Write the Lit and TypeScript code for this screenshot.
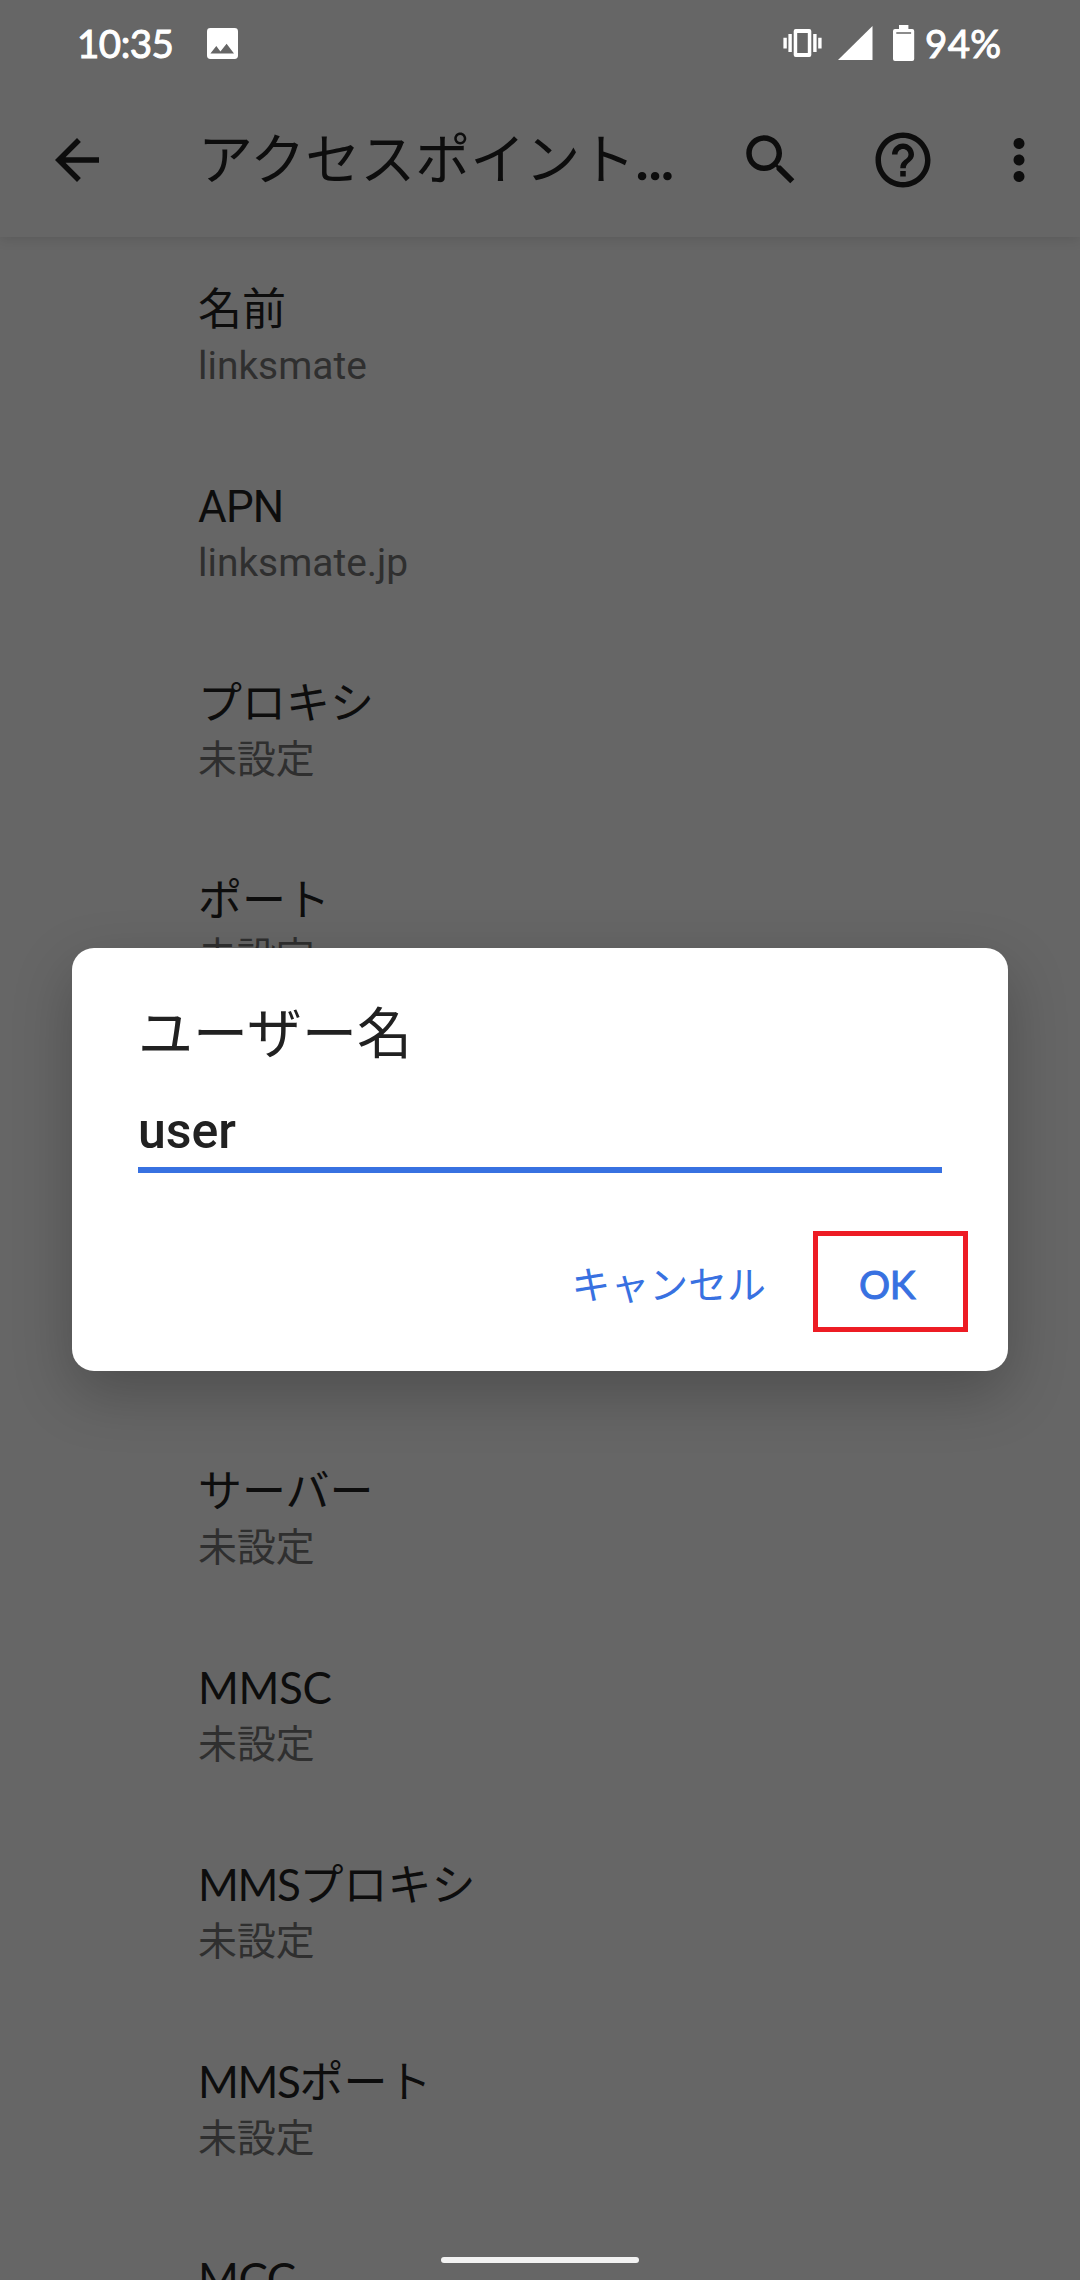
import { LitElement, html, css, svg, nothing } from "lit";
import { customElement, property } from "lit/decorators.js";

interface Setting {
  title: string;
  summary?: string;
  geometric?: boolean;
}

const UPPER: Setting[] = [
  { title: "名前", summary: "linksmate" },
  { title: "APN", summary: "linksmate.jp" },
  { title: "プロキシ", summary: "未設定" },
  { title: "ポート", summary: "未設定" },
];

const LOWER: Setting[] = [
  { title: "サーバー", summary: "未設定" },
  { title: "MMSC", summary: "未設定", geometric: true },
  { title: "MMSプロキシ", summary: "未設定", geometric: true },
  { title: "MMSポート", summary: "未設定", geometric: true },
  { title: "MCC", geometric: true },
];

const ICONS: Record<string, string> = {
  back: "M20 11H7.83l5.59-5.59L12 4l-8 8 8 8 1.41-1.41L7.83 13H20v-2z",
  search:
    "M15.5 14h-.79l-.28-.27C15.41 12.59 16 11.11 16 9.5 16 5.91 13.09 3 9.5 3S3 5.91 3 9.5 5.91 16 9.5 16c1.61 0 3.09-.59 4.23-1.57l.27.28v.79l5 4.99L20.49 19l-4.99-5zm-6 0C7.01 14 5 11.99 5 9.5S7.01 5 9.5 5 14 7.01 14 9.5 11.99 14 9.5 14z",
  help: "M11 18h2v-2h-2v2zm1-16C6.48 2 2 6.48 2 12s4.48 10 10 10 10-4.48 10-10S17.52 2 12 2zm0 18c-4.41 0-8-3.59-8-8s3.59-8 8-8 8 3.59 8 8-3.59 8-8 8zm0-14c-2.21 0-4 1.79-4 4h2c0-1.1.9-2 2-2s2 .9 2 2c0 2-3 1.75-3 5h2c0-2.25 3-2.5 3-5 0-2.21-1.79-4-4-4z",
  more: "M12 8c1.1 0 2-.9 2-2s-.9-2-2-2-2 .9-2 2 .9 2 2 2zm0 2c-1.1 0-2 .9-2 2s.9 2 2 2 2-.9 2-2-.9-2-2-2zm0 6c-1.1 0-2 .9-2 2s.9 2 2 2 2-.9 2-2-.9-2-2-2z",
};

@customElement("tool-icon")
class ToolIcon extends LitElement {
  @property() name = "back";

  static styles = css`
    :host {
      display: block;
      width: 66px;
      height: 66px;
      flex: none;
    }
    svg {
      display: block;
      width: 66px;
      height: 66px;
      fill: #0d0d0d;
    }
  `;

  render() {
    return html`<svg viewBox="0 0 24 24">${svg`<path d=${ICONS[this.name]}></path>`}</svg>`;
  }
}

@customElement("status-bar")
class StatusBar extends LitElement {
  static styles = css`
    :host {
      display: flex;
      align-items: flex-start;
      height: 83px;
      padding-left: 77px;
      padding-right: 78px;
      color: #fff;
      font: 400 38.5px/46px Lato, Roboto, sans-serif;
    }
    svg {
      display: block;
      flex: none;
    }
    .time {
      width: 130px;
      padding-top: 20px;
      letter-spacing: -0.5px;
      -webkit-text-stroke: 1px #fff;
      box-sizing: border-box;
    }
    .level {
      width: 77px;
      padding-top: 20px;
      letter-spacing: 0.3px;
      -webkit-text-stroke: 1px #fff;
      white-space: nowrap;
    }
    .photo {
      margin-top: 28px;
    }
    .vibrate {
      margin: 29px 16px 0 auto;
    }
    .signal {
      margin: 26px 20px 0 0;
    }
    .battery {
      margin: 25px 10px 0 0;
    }
  `;

  render() {
    return html`
      <span class="time">10:35</span>
      <svg class="photo" width="31" height="31" viewBox="0 0 31 31">
        <path
          fill="#fff"
          fill-rule="evenodd"
          d="M3.4 0h24.2a3.4 3.4 0 0 1 3.4 3.4v24.2a3.4 3.4 0 0 1-3.4 3.4H3.4A3.4 3.4 0 0 1 0 27.6V3.4A3.4 3.4 0 0 1 3.4 0zM3.4 25.6H27L19.6 15.7 13.4 23.4 9.3 18z"
        ></path>
      </svg>
      <svg class="vibrate" width="39" height="28" viewBox="0 0 39 28">
        <path
          fill="#fff"
          fill-rule="evenodd"
          d="M12.7 0h13.6a2 2 0 0 1 2 2v24a2 2 0 0 1-2 2H12.7a2 2 0 0 1-2-2V2a2 2 0 0 1 2-2zM14.2 4v20h10.6V4zM5.4 5h3.4v18H5.4zM30.2 5h3.4v18h-3.4zM.4 8.7h3.4v10.8H.4zM35.2 8.7h3.4v10.8h-3.4z"
        ></path>
      </svg>
      <svg class="signal" width="35" height="34" viewBox="0 0 35 34">
        <path fill="#fff" d="M34.5 0v34H0z"></path>
      </svg>
      <svg class="battery" width="22" height="36" viewBox="0 0 22 36">
        <path
          fill="#fff"
          fill-rule="evenodd"
          d="M6 0h9.4v4H19.2a2 2 0 0 1 2 2v28a2 2 0 0 1-2 2H2a2 2 0 0 1-2-2V6a2 2 0 0 1 2-2H6zM3.3 7.2v1.6h14.8V7.2z"
        ></path>
      </svg>
      <span class="level">94%</span>
    `;
  }
}

@customElement("setting-row")
class SettingRow extends LitElement {
  @property({ attribute: false }) item!: Setting;

  static styles = css`
    :host {
      display: block;
      box-sizing: border-box;
      height: 197px;
      padding: 46px 0 0 198px;
      white-space: nowrap;
      font-family: Roboto, "Noto Sans CJK JP", sans-serif;
    }
    .title {
      font-size: 44px;
      line-height: 54px;
      color: #0d0d0d;
    }
    .latin {
      font-family: Lato, Roboto, sans-serif;
      line-height: 0;
      letter-spacing: -1.4px;
    }
    .alone {
      letter-spacing: -0.4px;
    }
    .tight {
      letter-spacing: -0.8px;
    }
    .summary {
      font-size: 38.9px;
      line-height: 57px;
      color: #2f2f2f;
    }
  `;

  render() {
    const { title, summary, geometric } = this.item;
    const latin = geometric ? title.match(/^[A-Z]+/)![0] : "";
    const rest = title.slice(latin.length);
    const tight = !geometric && /^[A-Z]+$/.test(title);
    return html`
      <div class=${tight ? "title tight" : "title"}>${latin
        ? html`<span class=${rest ? "latin" : "latin alone"}>${latin}</span>`
        : nothing}${rest}</div>
      ${summary ? html`<div class="summary">${summary}</div>` : nothing}
    `;
  }
}

@customElement("edit-dialog")
class EditDialog extends LitElement {
  static styles = css`
    :host {
      display: block;
      box-sizing: border-box;
      width: 936px;
      height: 423px;
      padding: 0 40px 0 66px;
      border-radius: 22px;
      background: #fff;
      box-shadow: 0 22px 60px rgba(0, 0, 0, 0.24);
      font-family: Roboto, "Noto Sans CJK JP", sans-serif;
      color: #212121;
    }
    .heading {
      padding-top: 52px;
      font-size: 55px;
      line-height: 68px;
    }
    .field {
      width: 804px;
      height: 105px;
      box-sizing: border-box;
      padding-top: 33px;
      border-bottom: 6px solid #3871e1;
      font-size: 50px;
      line-height: 60px;
      font-weight: 500;
    }
    .actions {
      display: flex;
      justify-content: flex-end;
      align-items: center;
      margin-top: 58px;
      height: 101px;
      gap: 47px;
      color: #3871e1;
      font-size: 38.9px;
      line-height: 48px;
    }
    .cancel {
      padding-top: 9px;
    }
    .ok {
      display: flex;
      align-items: center;
      justify-content: center;
      box-sizing: border-box;
      width: 155px;
      height: 101px;
      padding: 5px 7px 0 0;
      border: 5px solid #ed1c24;
      font-family: Lato, Roboto, sans-serif;
      -webkit-text-stroke: 1px #3871e1;
      letter-spacing: -0.5px;
    }
  `;

  render() {
    return html`
      <div class="heading">ユーザー名</div>
      <div class="field">user</div>
      <div class="actions">
        <span class="cancel">キャンセル</span>
        <span class="ok">OK</span>
      </div>
    `;
  }
}

@customElement("app-root")
class AppRoot extends LitElement {
  static styles = css`
    :host {
      display: block;
      position: relative;
      width: 1080px;
      height: 2280px;
      overflow: hidden;
      background: #666;
    }
    .toolbar {
      display: flex;
      align-items: center;
      box-sizing: border-box;
      height: 154px;
      padding: 0 28px 0 44px;
      color: #0d0d0d;
      box-shadow: 0 2px 12px rgba(0, 0, 0, 0.12);
      clip-path: inset(0 0 -20px 0);
    }
    .page-title {
      width: 540px;
      margin-left: 88px;
      white-space: nowrap;
      font: 400 55px/68px Roboto, "Noto Sans CJK JP", sans-serif;
    }
    .ellipsis {
      margin-left: -1px;
      font-size: 61px;
      line-height: 0;
      -webkit-text-stroke: 1.6px #0d0d0d;
    }
    .search {
      margin-right: 66px;
    }
    .help {
      margin-right: 50px;
    }
    .covered {
      height: 394px;
    }
    .dialog {
      position: absolute;
      left: 72px;
      top: 948px;
    }
    .pill {
      position: absolute;
      left: 441px;
      top: 2257px;
      width: 198px;
      height: 6px;
      border-radius: 3px;
      background: #f2f2f2;
    }
  `;

  render() {
    return html`
      <status-bar></status-bar>
      <header class="toolbar">
        <tool-icon name="back"></tool-icon>
        <div class="page-title" lang="ja">アクセスポイント<span class="ellipsis">…</span></div>
        <tool-icon class="search" name="search"></tool-icon>
        <tool-icon class="help" name="help"></tool-icon>
        <tool-icon name="more"></tool-icon>
      </header>
      <main lang="ja">
        ${UPPER.map((item) => html`<setting-row .item=${item}></setting-row>`)}
        <div class="covered"></div>
        ${LOWER.map((item) => html`<setting-row .item=${item}></setting-row>`)}
      </main>
      <edit-dialog class="dialog" lang="ja"></edit-dialog>
      <div class="pill"></div>
    `;
  }
}
